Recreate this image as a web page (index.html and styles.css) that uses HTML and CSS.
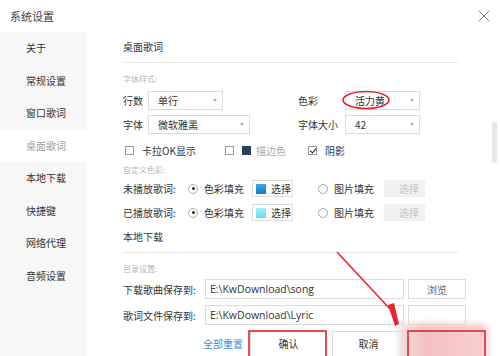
FILE: index.html
```html
<!DOCTYPE html>
<html lang="zh-CN">
<head>
    <meta charset="UTF-8">
    <title>系统设置</title>
    <link rel="stylesheet" href="styles.css">
</head>
<body>

<div class="window">
    <div class="titlebar">
        <span class="title">系统设置</span>
        <svg class="close" width="12" height="12" viewBox="0 0 12 12">
            <path d="M1 1 L11 11 M11 1 L1 11" stroke="#777" stroke-width="1" fill="none"/>
        </svg>
    </div>

    <div class="main">
        <ul class="nav">
            <li>关于</li>
            <li>常规设置</li>
            <li>窗口歌词</li>
            <li class="active">桌面歌词</li>
            <li>本地下载</li>
            <li>快捷键</li>
            <li>网络代理</li>
            <li>音频设置</li>
        </ul>

        <div class="content">
            <h2 class="section-title">桌面歌词</h2>

            <div class="group-label">字体样式:</div>
            <div class="font-grid">
                <span class="label">行数</span>
                <div class="select short"><span>单行</span><i class="caret"></i></div>
                <span class="label">色彩</span>
                <div class="select short"><span>活力黄</span><i class="caret"></i></div>

                <span class="label">字体</span>
                <div class="select long"><span>微软雅黑</span><i class="caret"></i></div>
                <span class="label">字体大小</span>
                <div class="select short"><span>42</span><i class="caret"></i></div>
            </div>

            <div class="check-row">
                <label class="check-item first"><i class="box"></i>卡拉OK显示</label>
                <label class="check-item second"><i class="box"></i><i class="stroke-color"></i><span class="muted">描边色</span></label>
                <label class="check-item"><i class="box checked"></i>阴影</label>
            </div>

            <div class="group-label custom">自定义色彩:</div>
            <div class="color-row">
                <span>未播放歌词:</span>
                <label class="radio-item"><i class="radio on"></i>色彩填充</label>
                <button class="pick"><i class="swatch blue"></i>选择</button>
                <label class="radio-item"><i class="radio"></i>图片填充</label>
                <button class="pick disabled">选择</button>
            </div>
            <div class="color-row">
                <span>已播放歌词:</span>
                <label class="radio-item"><i class="radio on"></i>色彩填充</label>
                <button class="pick"><i class="swatch cyan"></i>选择</button>
                <label class="radio-item"><i class="radio"></i>图片填充</label>
                <button class="pick disabled">选择</button>
            </div>

            <h2 class="section-title second-title">本地下载</h2>

            <div class="group-label">目录设置:</div>
            <div class="path-row">
                <span>下载歌曲保存到:</span>
                <div class="path-input">E:\KwDownload\song</div>
                <button class="browse">浏览</button>
            </div>
            <div class="path-row">
                <span>歌词文件保存到:</span>
                <div class="path-input">E:\KwDownload\Lyric</div>
                <button class="browse"></button>
            </div>

            <div class="footer-row">
                <a class="reset" href="#">全部重置</a>
                <button class="btn ok">确认</button>
                <button class="btn cancel">取消</button>
                <button class="btn apply"></button>
            </div>

            <div class="scroll-thumb"></div>
        </div>
    </div>

    <!-- red marks drawn over the screenshot -->
    <svg class="marks" width="500" height="356" viewBox="0 0 500 356">
        <defs>
            <filter id="soft" x="-20%" y="-20%" width="140%" height="140%">
                <feGaussianBlur stdDeviation="3"/>
            </filter>
            <linearGradient id="pink" x1="0" y1="0" x2="1" y2="0">
                <stop offset="0" stop-color="#f2e2e2"/>
                <stop offset="0.3" stop-color="#f3c0c1"/>
                <stop offset="1" stop-color="#f7d0d1"/>
            </linearGradient>
        </defs>
        <ellipse cx="366" cy="100" rx="23" ry="8.5" fill="none" stroke="#e0262b" stroke-width="1.6"/>
        <rect x="398" y="324" width="90" height="40" fill="url(#pink)" filter="url(#soft)"/>
        <path d="M337 252 L390 309" stroke="#e8262b" stroke-width="1.6" fill="none"/>
        <path d="M388 305 L394 303 L399 324 L395 326 Z" fill="#e8262b"/>
        <rect x="249" y="331" width="77" height="30" fill="none" stroke="#e0262b" stroke-width="1.6"/>
        <rect x="408" y="331" width="77" height="30" fill="none" stroke="#e0262b" stroke-width="1.6"/>
    </svg>
</div>

</body>
</html>
```

FILE: styles.css
```css
body {
    margin: 0;
    font-family: "Noto Sans CJK SC", sans-serif;
    font-size: 10px;
    color: #333;
    background: #fff;
}
.window {
    position: relative;
    width: 500px;
    height: 356px;
    overflow: hidden;
    background: #fff;
}
.titlebar {
    height: 32px;
    display: flex;
    align-items: center;
    justify-content: space-between;
    padding: 0 10px;
}
.title {
    font-size: 11px;
    color: #444;
}
.main {
    display: flex;
    height: 324px;
}
.nav {
    list-style: none;
    margin: 0;
    padding: 0;
    flex: 0 0 87px;
    background: #f7f7f7;
}
.nav li {
    height: 32.5px;
    line-height: 32.5px;
    padding-left: 26px;
    color: #333;
    white-space: nowrap;
}
.nav li.active {
    background: #fff;
    color: #a0a0a0;
}
.content {
    position: relative;
    flex: 1;
    min-width: 0;
    padding: 0 42px 0 36px;
}
.section-title {
    margin: 0;
    font-size: 10px;
    font-weight: normal;
    line-height: 14px;
    padding: 8px 0 8px;
    border-bottom: 1px solid #e6e6e6;
}
.second-title {
    padding-top: 9px;
}
.group-label {
    font-size: 8px;
    color: #b8b8b8;
    line-height: 12px;
    margin-top: 10px;
}
.font-grid {
    display: grid;
    grid-template-columns: 25px 150px 47px 75px;
    grid-auto-rows: 20px;
    row-gap: 4px;
    align-items: center;
    margin-top: 5px;
}
.select {
    height: 19px;
    box-sizing: border-box;
    border: 1px solid #dcdcdc;
    display: flex;
    align-items: center;
    justify-content: space-between;
    padding: 0 5px 0 9px;
}
.select.short {
    width: 75px;
}
.select.long {
    width: 102px;
}
.caret {
    width: 0;
    height: 0;
    border-left: 2.5px solid transparent;
    border-right: 2.5px solid transparent;
    border-top: 3px solid #aaa;
}
.check-row {
    display: flex;
    align-items: center;
    height: 14px;
    margin-top: 9px;
}
.check-item {
    display: flex;
    align-items: center;
    flex-shrink: 0;
}
.check-item.first {
    width: 102px;
    padding-left: 2px;
    box-sizing: border-box;
}
.check-item.second {
    width: 83px;
}
.box {
    width: 9px;
    height: 9px;
    box-sizing: border-box;
    border: 1px solid #9a9a9a;
    margin-right: 8px;
    position: relative;
}
.box.checked::after {
    content: "";
    position: absolute;
    left: 2px;
    top: 0;
    width: 3px;
    height: 5px;
    border: solid #222;
    border-width: 0 1.5px 1.5px 0;
    transform: rotate(40deg);
}
.stroke-color {
    width: 9px;
    height: 9px;
    background: #243f5f;
    margin: 0 5px 0 0;
}
.muted {
    color: #aaa;
}
.custom {
    margin-top: 7px;
}
.color-row {
    display: grid;
    grid-template-columns: 65px 64px 66px 66px 41px;
    align-items: center;
    height: 17px;
    margin-top: 4px;
}
.color-row + .color-row {
    margin-top: 7px;
}
.radio-item {
    display: flex;
    align-items: center;
}
.radio {
    width: 10px;
    height: 10px;
    box-sizing: border-box;
    border: 1px solid #a8a8a8;
    border-radius: 50%;
    margin-right: 6px;
    position: relative;
}
.radio.on::after {
    content: "";
    position: absolute;
    left: 2.5px;
    top: 2.5px;
    width: 3px;
    height: 3px;
    border-radius: 50%;
    background: #222;
}
.pick {
    width: 41px;
    height: 17px;
    padding: 0 0 0 3px;
    border: 1px solid #dcdcdc;
    background: #fff;
    font-family: inherit;
    font-size: 10px;
    color: #333;
    display: flex;
    align-items: center;
}
.pick.disabled {
    border-color: #f1f1f1;
    background: #f1f1f1;
    color: #c8c8c8;
    justify-content: flex-end;
    padding-right: 5px;
}
.swatch {
    width: 10px;
    height: 10px;
    margin-right: 5px;
}
.swatch.blue {
    background: linear-gradient(#3aa6e6, #0f7fcc);
}
.swatch.cyan {
    background: linear-gradient(#9ff0f6, #63dde8);
}
.path-row {
    display: flex;
    align-items: center;
    height: 20px;
    margin: 4px -40px 0 0;
}
.path-row + .path-row {
    margin-top: 6px;
}
.path-row span {
    flex: 0 0 82px;
}
.path-input {
    flex: 0 0 199px;
    height: 20px;
    box-sizing: border-box;
    border: 1px solid #dcdcdc;
    padding-left: 4px;
    line-height: 18px;
    font-family: "Open Sans", "Noto Sans CJK SC", sans-serif;
    font-size: 10.5px;
}
.browse {
    flex: 0 0 58px;
    margin-left: 4px;
    height: 20px;
    border: 1px solid #dcdcdc;
    background: #fff;
    font-family: inherit;
    font-size: 10px;
    color: #666;
}
.footer-row {
    display: flex;
    align-items: flex-start;
    margin: 6px -40px 0 0;
    padding-left: 80px;
}
.reset {
    flex: 0 0 47px;
    color: #3d8fd8;
    text-decoration: none;
    line-height: 14px;
    margin-top: 6px;
}
.btn {
    flex-shrink: 0;
    height: 30px;
    padding: 0 0 5px;
    border: 1px solid #dcdcdc;
    background: #fff;
    font-family: inherit;
    font-size: 10px;
    color: #333;
}
.btn.ok {
    width: 77px;
}
.btn.cancel {
    width: 73px;
    margin-left: 5px;
}
.btn.apply {
    width: 77px;
    margin-left: 3px;
}
.scroll-thumb {
    position: absolute;
    right: 3px;
    top: 90px;
    width: 5px;
    height: 41px;
    border-radius: 2px;
    background: #e6e6e6;
}
.marks {
    position: absolute;
    left: 0;
    top: 0;
    pointer-events: none;
}
```
